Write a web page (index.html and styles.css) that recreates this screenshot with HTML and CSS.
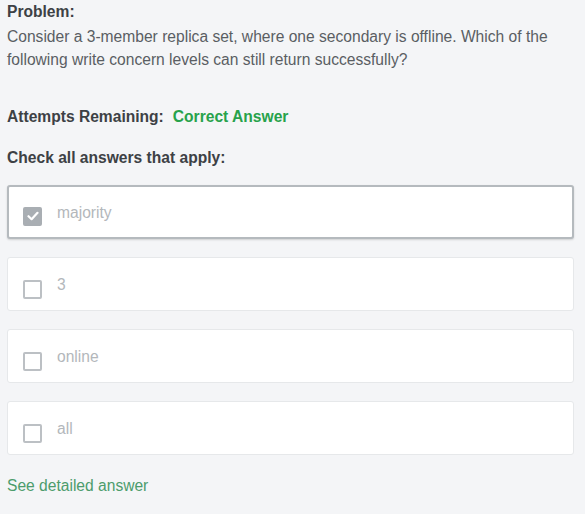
FILE: index.html
```html
<!DOCTYPE html>
<html>
<head>
<meta charset="utf-8">
<link rel="stylesheet" href="styles.css">
</head>
<body>
<div class="page">
  <div class="problem">
    <div class="label">Problem:</div>
    <p class="question">Consider a 3-member replica set, where one secondary is offline. Which of the following write concern levels can still return successfully?</p>
  </div>
  <div class="attempts"><span class="label">Attempts Remaining:</span><span class="correct">Correct Answer</span></div>
  <div class="label check">Check all answers that apply:</div>
  <div class="options">
    <div class="option selected">
      <span class="box checked"><svg width="12" height="10" viewBox="0 0 12 10"><path d="M1.5 5.2 L4.6 8.2 L10.5 1.8" fill="none" stroke="#fff" stroke-width="2.2" stroke-linecap="round" stroke-linejoin="round"/></svg></span>
      <span class="text">majority</span>
    </div>
    <div class="option"><span class="box"></span><span class="text">3</span></div>
    <div class="option"><span class="box"></span><span class="text">online</span></div>
    <div class="option"><span class="box"></span><span class="text">all</span></div>
  </div>
  <a class="detail">See detailed answer</a>
</div>
</body>
</html>
```
FILE: styles.css
```css
html, body { margin: 0; padding: 0; background: #f4f5f7; }
body { font-family: "Liberation Sans", Arial, sans-serif; color: #494d52; }
.page { padding: 2px 11px 0 7px; }
.label { font-weight: bold; font-size: 15.6px; color: #3d4145; }
.problem .label { line-height: 20px; }
.question { margin: 3px 0 0; font-size: 15.6px; line-height: 23px; color: #5a5e63; }
.attempts { margin-top: 36px; line-height: 20px; display: flex; gap: 9px; }
.correct { font-weight: bold; font-size: 15.6px; color: #27a24b; }
.check { margin-top: 21px; line-height: 20px; }
.options { margin-top: 17px; display: flex; flex-direction: column; gap: 18px; }
.option { background: #fff; border: 1px solid #e6e8ea; border-radius: 3px; height: 54px; display: flex; align-items: center; padding-left: 15px; box-sizing: border-box; }
.option.selected { border: 2px solid #b5babe; box-shadow: 0 1px 2px rgba(0,0,0,0.15); padding-left: 14px; }
.box { width: 15px; height: 15px; border: 2px solid #bcc0c4; border-radius: 2px; box-sizing: content-box; margin-right: 15px; display: flex; align-items: center; justify-content: center; margin-top: 10px; }
.box.checked { background: #a9aeb3; border-color: #a9aeb3; margin-top: 8px; }
.text { font-size: 15.6px; color: #b3b7bb; margin-top: 2px; }
.detail { display: block; margin-top: 22px; font-size: 15.6px; color: #4c9c6c; }
```
